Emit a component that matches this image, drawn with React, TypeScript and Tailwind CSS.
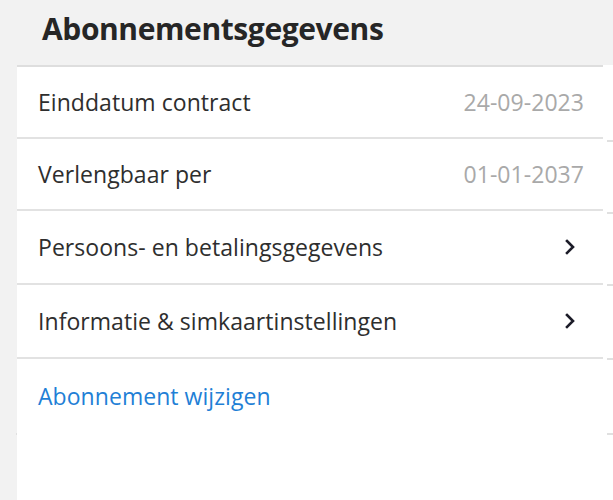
import React from "react";

const font = { fontFamily: '"Open Sans", "Noto Sans", sans-serif' };

function Chevron() {
  return (
    <svg width="12" height="16" viewBox="0 0 12 16" className="mr-[8px]">
      <polyline points="3,2 9,8 3,14" fill="none" stroke="#1c1c28" strokeWidth="2.6" strokeLinecap="square" />
    </svg>
  );
}

export default function App() {
  return (
    <div className="w-[613px] h-[500px] bg-[#f2f2f2] flex flex-col overflow-hidden" style={font}>
      <div className="h-[65px] pl-[42px] pt-[9px]">
        <h1 className="text-[30px] font-bold text-[#262626] leading-[40px] tracking-[-0.4px]">Abonnementsgegevens</h1>
      </div>
      <div className="flex flex-1">
        <div className="w-[17px] flex flex-col">
          <div className="h-[368px]" />
          <div className="h-[2px] ml-[16px] bg-[#e0e0e0]" />
          <div className="flex-1" />
        </div>
        <div className="w-[586px] flex flex-col">
          <div className="h-[2px] bg-[#dedede]" />
          <div className="bg-white flex-1 flex flex-col text-[23px] text-[#2e2e2e] tracking-[0.05px]">
            <div className="h-[72px] flex items-center justify-between pl-[21px] pr-[19px] border-b-2 border-[#e2e2e2]">
              <span>Einddatum contract</span>
              <span className="text-[#a9a9a9]">24-09-2023</span>
            </div>
            <div className="h-[72px] flex items-center justify-between pl-[21px] pr-[19px] border-b-2 border-[#e2e2e2]">
              <span>Verlengbaar per</span>
              <span className="text-[#a9a9a9]">01-01-2037</span>
            </div>
            <div className="h-[74px] flex items-center justify-between pl-[21px] pr-[19px] border-b-2 border-[#e2e2e2]">
              <span>Persoons- en betalingsgegevens</span>
              <Chevron />
            </div>
            <div className="h-[74px] flex items-center justify-between pl-[21px] pr-[19px] border-b-2 border-[#e2e2e2]">
              <span>Informatie &amp; simkaartinstellingen</span>
              <Chevron />
            </div>
            <div className="h-[74px] flex items-center pl-[21px] pr-[19px]">
              <span className="text-[#1f7fd6]">Abonnement wijzigen</span>
            </div>
            <div className="flex-1" />
          </div>
        </div>
        <div className="flex-1 bg-white flex flex-col pl-[4px]">
          <div className="h-[77px] border-b-2 border-[#e0e0e0]" />
          <div className="h-[72px] border-b-2 border-[#e0e0e0]" />
          <div className="h-[72px] border-b-2 border-[#e0e0e0]" />
          <div className="h-[74px] border-b-2 border-[#e0e0e0]" />
          <div className="h-[75px] border-b-2 border-[#e0e0e0]" />
        </div>
      </div>
    </div>
  );
}
